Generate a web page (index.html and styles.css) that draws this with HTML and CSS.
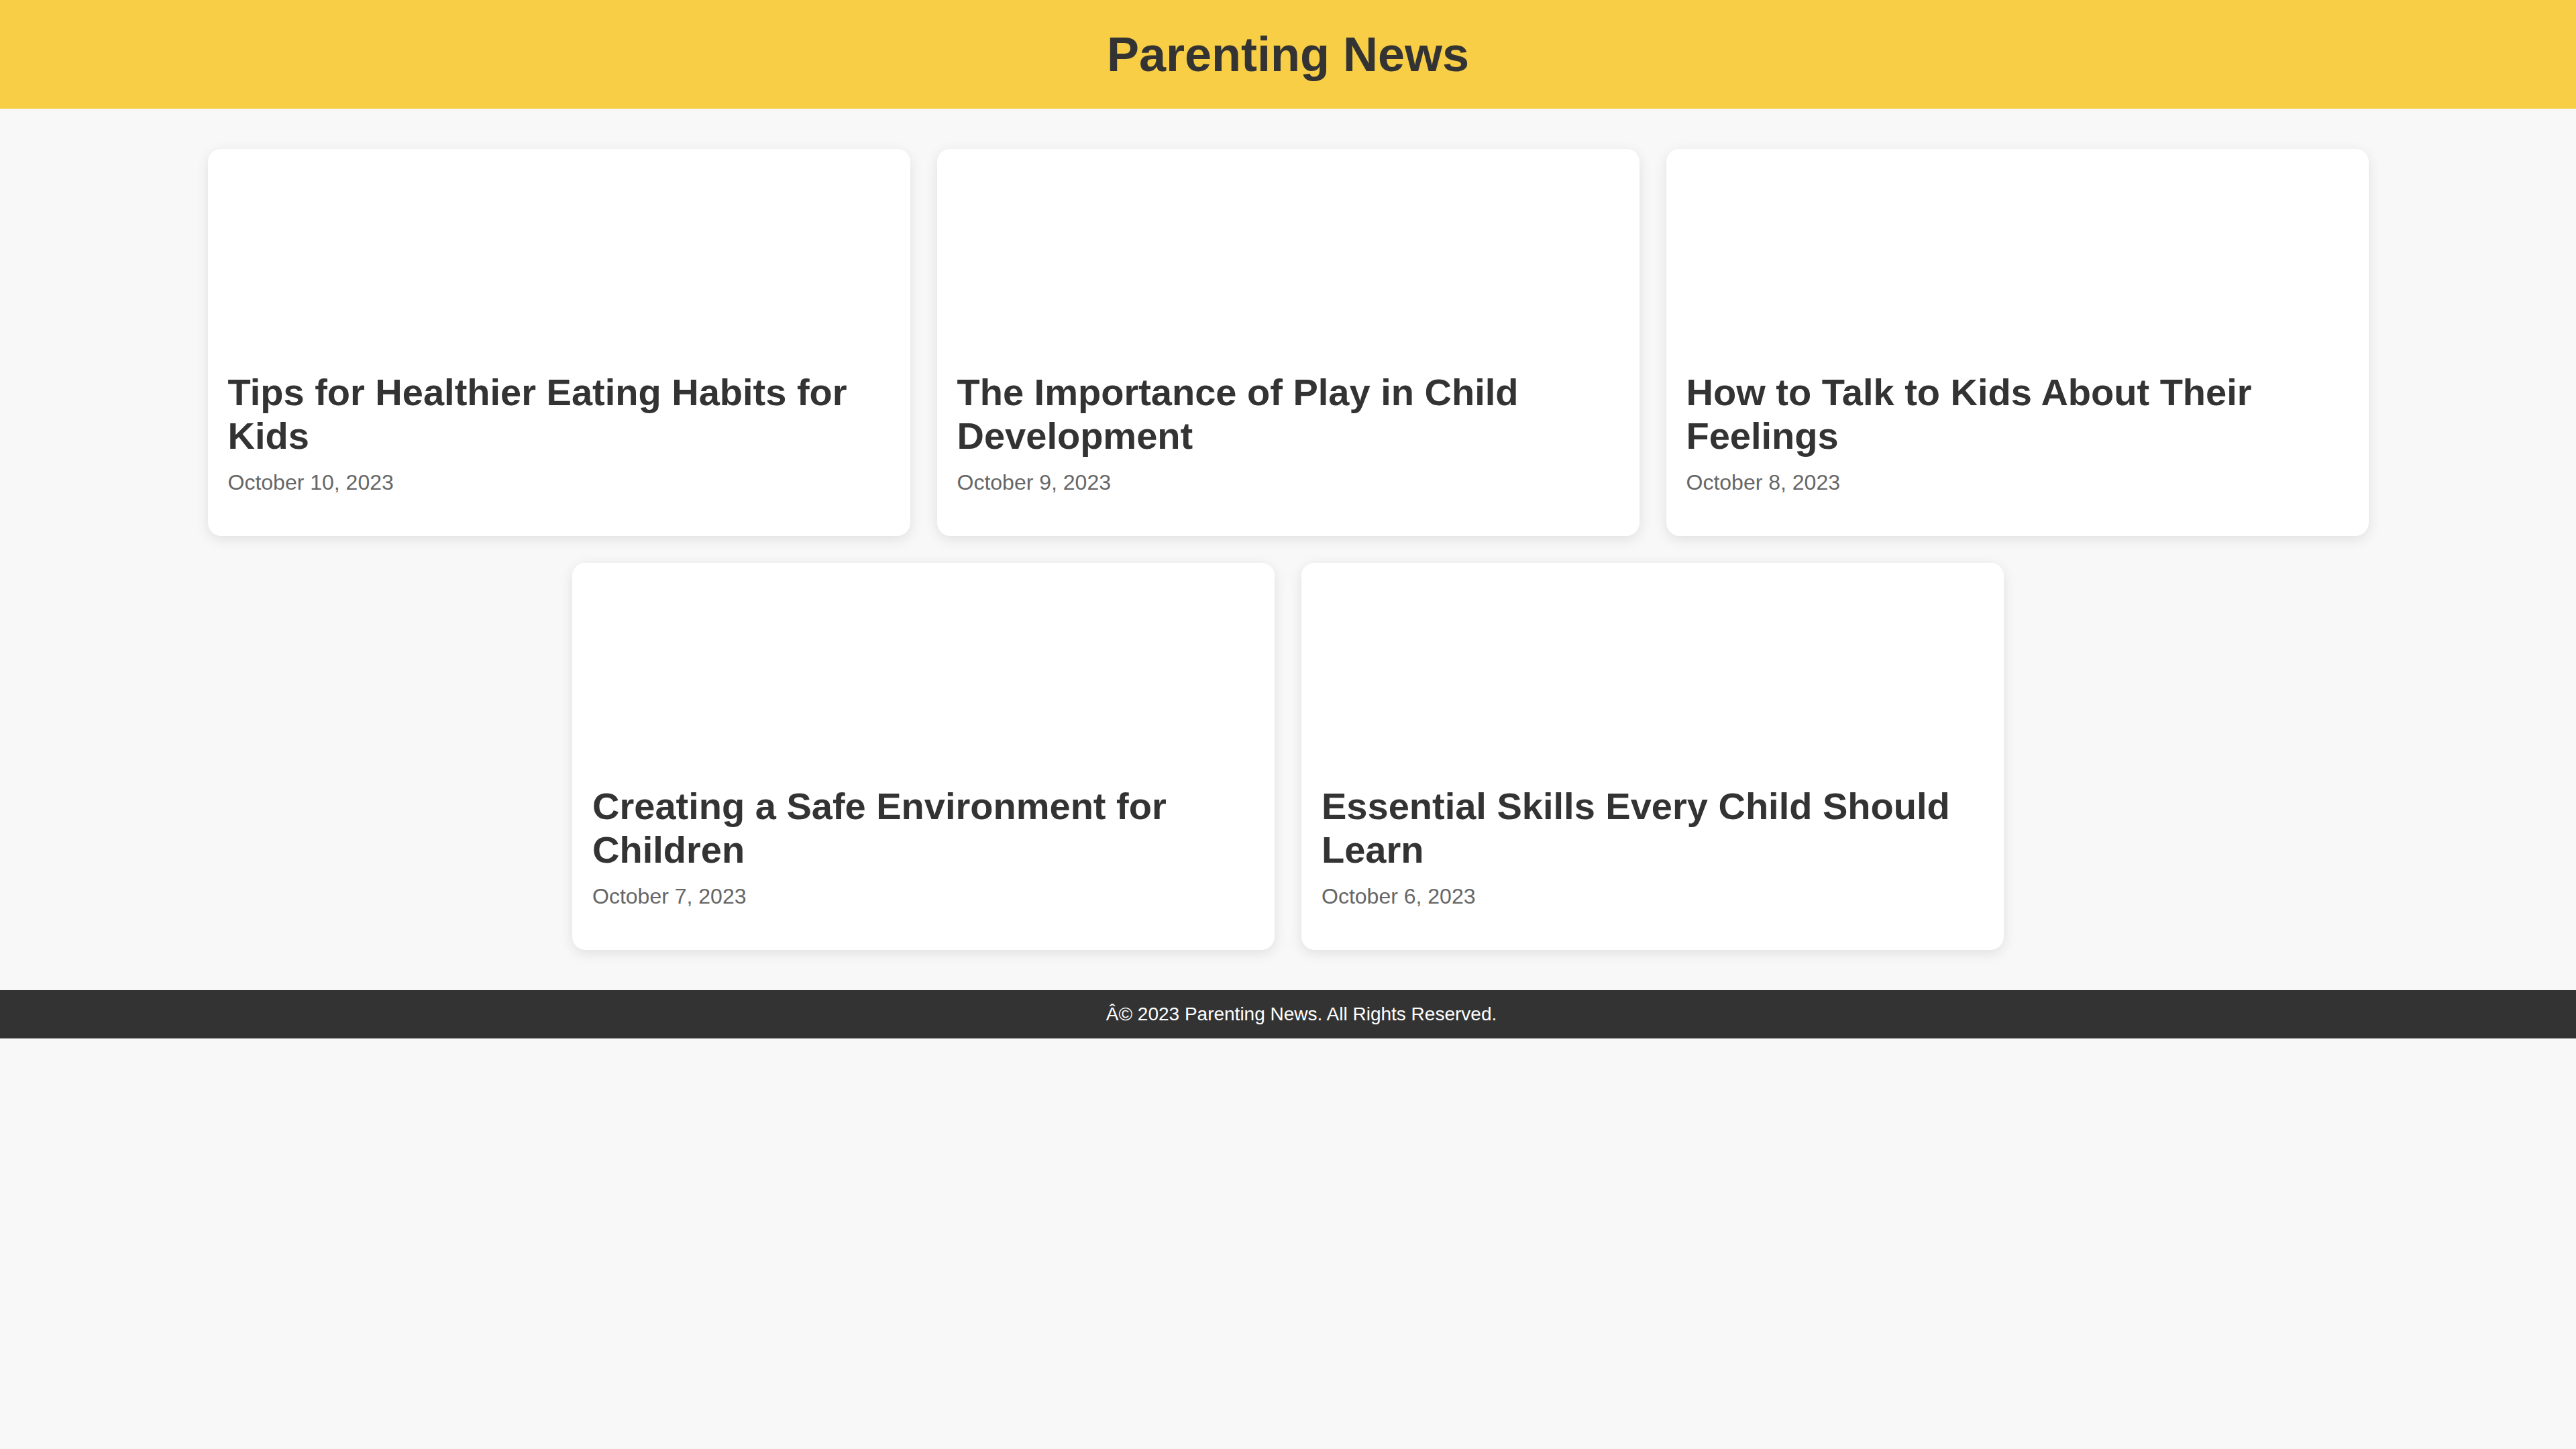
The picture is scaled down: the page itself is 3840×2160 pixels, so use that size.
FILE: index.html
```html
<!DOCTYPE html>
<html lang="en">
<head>
<meta charset="utf-8">
<title>Parenting News</title>
<link rel="stylesheet" href="styles.css">
</head>
<body>
<header class="site-header">
  <h1 class="site-title">Parenting News</h1>
</header>
<main class="site-main">
  <div class="grid">
    <article class="card">
      <div class="card-image"></div>
      <div class="card-body">
        <h2 class="card-title">Tips for Healthier Eating Habits for Kids</h2>
        <p class="card-date">October 10, 2023</p>
      </div>
    </article>
    <article class="card">
      <div class="card-image"></div>
      <div class="card-body">
        <h2 class="card-title">The Importance of Play in Child Development</h2>
        <p class="card-date">October 9, 2023</p>
      </div>
    </article>
    <article class="card">
      <div class="card-image"></div>
      <div class="card-body">
        <h2 class="card-title">How to Talk to Kids About Their Feelings</h2>
        <p class="card-date">October 8, 2023</p>
      </div>
    </article>
    <article class="card">
      <div class="card-image"></div>
      <div class="card-body">
        <h2 class="card-title">Creating a Safe Environment for Children</h2>
        <p class="card-date">October 7, 2023</p>
      </div>
    </article>
    <article class="card">
      <div class="card-image"></div>
      <div class="card-body">
        <h2 class="card-title">Essential Skills Every Child Should Learn</h2>
        <p class="card-date">October 6, 2023</p>
      </div>
    </article>
  </div>
</main>
<footer class="site-footer">
  <p class="footer-text">&Acirc;&copy; 2023 Parenting News. All Rights Reserved.</p>
</footer>
</body>
</html>
```
FILE: styles.css
```css
* {
  box-sizing: border-box;
}

html, body {
  margin: 0;
  padding: 0;
}

body {
  background: #f8f8f8;
  font-family: "Liberation Sans", Arial, Helvetica, sans-serif;
  color: #333333;
}

.site-header {
  background: #f7ce46;
  padding: 38px 0;
  text-align: center;
}

.site-title {
  margin: 0;
  font-size: 72px;
  line-height: 86px;
  font-weight: bold;
  color: #333333;
}

.site-main {
  padding: 60px 0;
}

.grid {
  display: flex;
  flex-wrap: wrap;
  justify-content: center;
  gap: 40px;
  max-width: 3221px;
  margin: 0 auto;
}

.card {
  flex: 0 0 1047px;
  background: #ffffff;
  border-radius: 20px;
  box-shadow: 0 5px 20px rgba(0, 0, 0, 0.1);
  overflow: hidden;
}

.card-image {
  height: 300px;
  background: #ffffff;
}

.card-body {
  padding: 30px 30px 30px;
}

.card-title {
  margin: 0 0 19px;
  font-size: 56px;
  line-height: 65px;
  font-weight: bold;
  color: #333333;
}

.card-date {
  margin: 0 0 31px;
  font-size: 32px;
  line-height: 37px;
  color: #666666;
}

.site-footer {
  background: #333333;
  padding: 20px 0 20px 40px;
  text-align: center;
}

.footer-text {
  margin: 0;
  font-size: 28px;
  line-height: 32px;
  color: #ffffff;
}
```
